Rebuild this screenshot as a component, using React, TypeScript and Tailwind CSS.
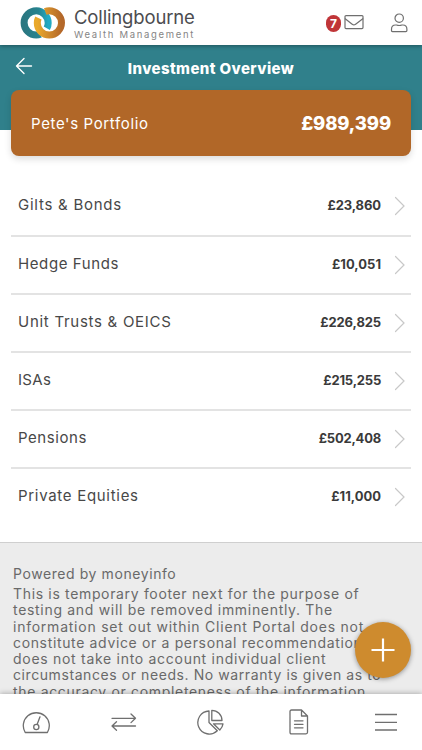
import React from "react";

const rows = [
  { name: "Gilts & Bonds", value: "£23,860", ls: "tracking-[0.750px]", vls: "tracking-[-0.100px]" },
  { name: "Hedge Funds", value: "£10,051", ls: "tracking-[0.600px]", vls: "tracking-[0px]" },
  { name: "Unit Trusts & OEICS", value: "£226,825", ls: "tracking-[0.720px]", vls: "tracking-[-0.120px]" },
  { name: "ISAs", value: "£215,255", ls: "tracking-[0.300px]", vls: "tracking-[-0.200px]" },
  { name: "Pensions", value: "£502,408", ls: "tracking-[0.560px]", vls: "tracking-[-0.200px]" },
  { name: "Private Equities", value: "£11,000", ls: "tracking-[0.700px]", vls: "tracking-[0px]" },
];

const footerLines = [
  { text: "This is temporary footer next for the purpose of", ls: "tracking-[0.660px]" },
  { text: "testing and will be removed imminently. The", ls: "tracking-[0.690px]" },
  { text: "information set out within Client Portal does not", ls: "tracking-[0.760px]" },
  { text: "constitute advice or a personal recommendation,", ls: "tracking-[0.650px]" },
  { text: "does not take into account individual client", ls: "tracking-[0.710px]" },
  { text: "circumstances or needs. No warranty is given as to", ls: "tracking-[0.580px]" },
  { text: "the accuracy or completeness of the information", ls: "tracking-[0.670px]" },
];

function Logo() {
  return (
    <svg width="46" height="34" viewBox="0 0 46 34" fill="none" className="shrink-0">
      <defs>
        <linearGradient id="teal" x1="0" y1="0" x2="1" y2="0">
          <stop offset="0" stopColor="#2a7781" />
          <stop offset="0.6" stopColor="#26838f" />
          <stop offset="1" stopColor="#22aac4" />
        </linearGradient>
        <linearGradient id="gold" x1="0" y1="0" x2="1" y2="0">
          <stop offset="0" stopColor="#e9a92c" />
          <stop offset="1" stopColor="#b4682a" />
        </linearGradient>
      </defs>
      <path d="M20.500 28.200A12.200 12.200 0 0 1 16.300 29A12.200 12.200 0 0 1 4.100 16.900A12.200 12.200 0 0 1 16.300 4.800C23 4.800 28.200 10.500 28.200 17C28.200 19 27.700 20.700 26.800 22.300" stroke="url(#teal)" strokeWidth="7" />
      <path d="M25.200 5.600A12.200 12.200 0 0 1 29.300 4.800A12.200 12.200 0 0 1 41.500 16.900A12.200 12.200 0 0 1 29.300 29C22.500 29 17.300 23.500 17.300 17C17.300 15 17.700 13.500 18.400 12" stroke="url(#gold)" strokeWidth="7" />
    </svg>
  );
}

const stroke = { fill: "none", stroke: "#6f6f6f", strokeWidth: 1.3, strokeLinecap: "round", strokeLinejoin: "round" } as const;

export default function App() {
  return (
    <div className="relative flex h-[750px] w-[422px] flex-col overflow-hidden bg-white font-['Inter','Liberation_Sans',sans-serif]">
      <header className="z-10 flex h-[45px] shrink-0 items-start bg-white pl-5 shadow-[0_1px_4px_rgba(0,0,0,0.35)]">
        <div className="pt-[6px]"><Logo /></div>
        <div className="ml-2 flex flex-col whitespace-nowrap pt-[6px]">
          <span className="text-[18.500px] leading-[22px] tracking-[-0.150px] text-[#4c4c50]">Collingbourne</span>
          <span className="text-[9.500px] leading-[13px] tracking-[1.680px] text-[#858585]">Wealth Management</span>
        </div>
        <div className="ml-auto flex pr-[14px] pt-[13px]">
          <span className="mt-[2px] flex h-[17px] w-[15px] items-center justify-center rounded-full bg-[#c03538] text-[12px] font-bold text-white">7</span>
          <svg width="20" height="16" viewBox="0 0 20 16" className="ml-[3px] mt-[1px]" {...stroke} strokeWidth={1.2}>
            <rect x="1" y="1.600" width="18" height="13" rx="1" />
            <path d="M1.200 4.800L8.200 10.300Q9.900 11.600 11.600 10.300L18.800 4.800" />
          </svg>
          <svg width="18" height="20" viewBox="0 0 18 20" className="ml-[26px]" {...stroke} strokeWidth={1.200}>
            <circle cx="9.200" cy="5.200" r="4.200" />
            <path d="M1.500 17.600V16.200Q1.500 12 5.500 12H6.500Q9.200 13 11.900 12H12.900Q16.900 12 16.900 16.200V17.600Q16.900 18.600 15.900 18.600H2.500Q1.500 18.600 1.500 17.600" />
          </svg>
        </div>
      </header>

      <section className="h-[85px] shrink-0 bg-[#30808b] px-[11px]">
        <div className="grid h-[45px] grid-cols-[40px_1fr_40px] items-center">
          <svg width="18" height="18" viewBox="0 0 18 18" className="mb-[3px] ml-[4px]" fill="none" stroke="white" strokeWidth="1.400" strokeLinecap="round" strokeLinejoin="round">
            <path d="M9 1.500L1.500 9L9 16.500M1.500 9H16.500" />
          </svg>
          <h1 className="whitespace-nowrap pt-[3px] text-center text-[15px] font-extrabold tracking-[0.400px] text-white">Investment Overview</h1>
        </div>
        <div className="flex h-[66px] items-center justify-between rounded-lg bg-[#b16728] px-5 text-white shadow-[0_3px_7px_rgba(0,0,0,0.14)]">
          <span className="pt-[2px] text-[15px] tracking-[0.630px]">Pete's Portfolio</span>
          <span className="pt-[2px] text-[18.500px] font-extrabold tracking-[-0.150px]">£989,399</span>
        </div>
      </section>

      <main className="mt-[46px] flex h-[366px] shrink-0 flex-col px-[11px]">
        {rows.map((r, i) => (
          <div key={r.name} className={`flex shrink-0 items-center pl-[7px] pr-[6px] ${i < rows.length - 1 ? "border-b-2 border-[#e3e3e3]" : ""} ${i === 0 ? "h-[61px]" : i === rows.length - 1 ? "h-[56px] pb-[1px]" : "h-[58px] pb-[1px]"}`}>
            <span className={`flex-1 text-[15px] text-[#484848] ${r.ls}`}>{r.name}</span>
            <span className={`text-[13px] font-bold text-[#3a3a3a] ${r.vls}`}>{r.value}</span>
            <svg width="11" height="20" viewBox="0 0 11 20" className="ml-[13px]" fill="none" stroke="#c8c8c8" strokeWidth="1.200" strokeLinecap="round">
              <path d="M1.500 1.500L10 10L1.500 18.500" />
            </svg>
          </div>
        ))}
      </main>

      <footer className="h-[152px] shrink-0 overflow-hidden border-t border-[#cfcfcf] bg-[#ececec] px-[13px] pt-[22px] text-[14px] text-[#696969]">
        <p className="mb-[3px] leading-[18px] tracking-[0.580px]">Powered by moneyinfo</p>
        {footerLines.map((l) => (
          <p key={l.text} className={`whitespace-nowrap leading-[16.300px] ${l.ls}`}>{l.text}</p>
        ))}
      </footer>

      <button aria-label="Add" className="absolute left-[355px] top-[622px] flex size-14 items-center justify-center rounded-full bg-[#ce8b2e] shadow-[0_1px_5px_rgba(0,0,0,0.4)]">
        <svg width="24" height="24" viewBox="0 0 24 24" stroke="white" strokeWidth="2.200"><path d="M0.500 12H23.500M12 0.500V23.500" /></svg>
      </button>

      <nav className="z-10 flex h-14 shrink-0 items-center justify-between bg-white px-[22px] shadow-[0_-1px_5px_rgba(0,0,0,0.25)]">
        <svg width="28" height="28" viewBox="0 0 28 28" {...stroke}>
          <path d="M3.200 24.500A13 13 0 1 1 25.400 24.500Z" />
          <circle cx="14.300" cy="19" r="2.600" /><path d="M15.100 16.400L18 8.800" />
        </svg>
        <svg width="28" height="28" viewBox="0 0 28 28" {...stroke}>
          <path d="M2 10.300H25.500M21 6L25.500 10.300L21 14.600M25.500 18H2M6.500 13.700L2 18L6.500 22.300" />
        </svg>
        <svg width="28" height="28" viewBox="0 0 28 28" {...stroke}>
          <path d="M12 3A11.500 11.500 0 1 0 20.300 22.800L12 14.500Z" />
          <path d="M14.800 2.300V12.500H25A10.200 10.200 0 0 0 14.800 2.300ZM16.500 15.800H26Q25.500 19.300 22.800 22Z" />
        </svg>
        <svg width="28" height="28" viewBox="0 0 28 28" {...stroke}>
          <path d="M5 3.500Q5 2 6.500 2H16.500L22.500 8V24.300Q22.500 25.800 21 25.800H6.500Q5 25.800 5 24.300ZM16.500 2V8H22.500M9.500 12.800H18M9.500 16.300H18M9.500 19.800H18" />
        </svg>
        <svg width="28" height="28" viewBox="0 0 28 28" {...stroke} strokeLinecap="butt">
          <path d="M3 6.500H25M3 14.300H25M3 22H25" />
        </svg>
      </nav>
    </div>
  );
}
